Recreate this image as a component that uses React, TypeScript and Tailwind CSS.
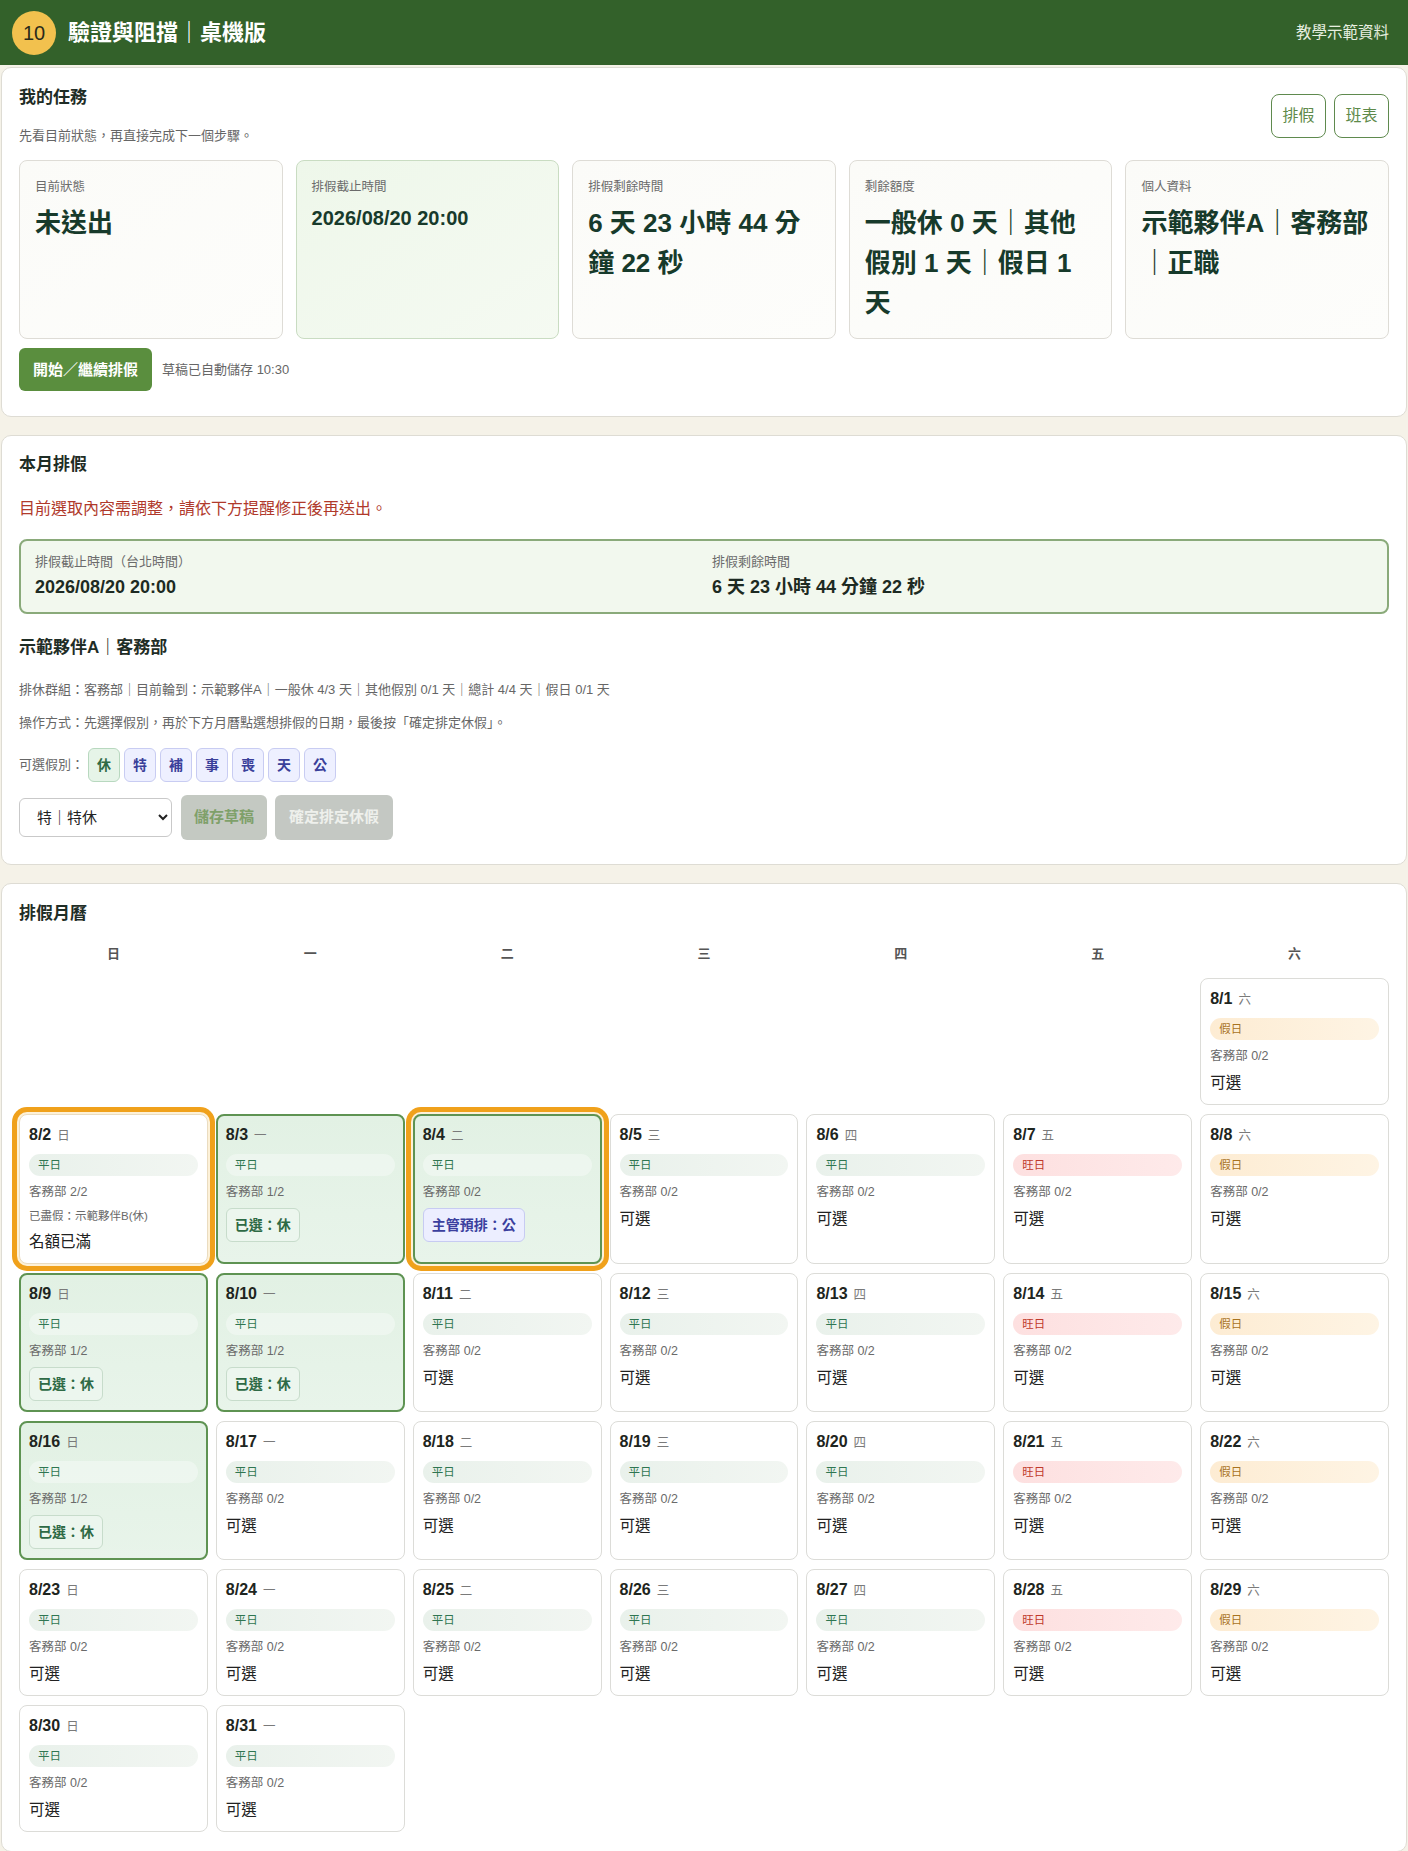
import clsx from 'clsx';

const WEEK = ['日', '一', '二', '三', '四', '五', '六'];

type Status = 'open' | 'full' | 'picked' | 'boss';

type Day = {
  d: number;
  dow: number;
  count: string;
  status: Status;
  selected?: boolean;
  ring?: boolean;
  note?: string;
};

const special: Record<number, Partial<Day>> = {
  2: { count: '2/2', status: 'full', ring: true, note: '已盡假：示範夥伴B(休)' },
  3: { count: '1/2', status: 'picked', selected: true },
  4: { count: '0/2', status: 'boss', selected: true, ring: true },
  9: { count: '1/2', status: 'picked', selected: true },
  10: { count: '1/2', status: 'picked', selected: true },
  16: { count: '1/2', status: 'picked', selected: true },
};

// 2026/08/01 是星期六
const days: Day[] = Array.from({ length: 31 }, (_, i) => {
  const d = i + 1;
  return { d, dow: (6 + i) % 7, count: '0/2', status: 'open' as Status, ...special[d] };
});

const kindOf = (dow: number) => (dow === 6 ? '假日' : dow === 5 ? '旺日' : '平日');

const kindClass: Record<string, string> = {
  平日: 'bg-gradient-to-r from-[#e9f1eb] to-[#f2f6f2] text-[#2f7651]',
  旺日: 'bg-gradient-to-r from-[#fde0e0] to-[#feeaea] text-[#c0392b]',
  假日: 'bg-gradient-to-r from-[#fdecd3] to-[#fef4e4] text-[#a8731f]',
};

const stats = [
  { label: '目前狀態', value: '未送出' },
  { label: '排假截止時間', value: '2026/08/20 20:00', small: true, green: true },
  { label: '排假剩餘時間', value: '6 天 23 小時 44 分鐘 22 秒' },
  { label: '剩餘額度', value: '一般休 0 天｜其他假別 1 天｜假日 1 天' },
  { label: '個人資料', value: '示範夥伴A｜客務部｜正職' },
];

const leaveTypes = ['休', '特', '補', '事', '喪', '天', '公'];

function DayCell({ day }: { day: Day }) {
  const kind = kindOf(day.dow);
  return (
    <div
      className={clsx(
        'flex flex-col gap-[7px] rounded-[8px]',
        day.selected
          ? 'border-2 border-[#5e9352] bg-gradient-to-b from-[#e2f1e4] to-[#e8f4ea] px-[8px] pb-[9px] pt-[7px]'
          : 'border border-[#dcdcd8] bg-white px-[9px] pb-[10px] pt-[8px]',
        day.ring && 'shadow-[0_0_0_2px_#fdf1d8,0_0_0_7px_#f0a11b]',
        day.ring && !day.selected && 'border-[#eadcc0]',
      )}
    >
      <div className="flex h-6 items-baseline text-[16px] font-bold leading-6 text-[#1e2520]">
        <span>8/{day.d}</span>
        <span className="ml-[6px] text-[12.5px] font-normal text-[#7a7a7a]">{WEEK[day.dow]}</span>
      </div>
      <div
        className={clsx(
          'h-[22px] rounded-full pl-[9px] text-[11.5px] leading-[22px]',
          day.selected ? 'bg-white/35 text-[#2f7651]' : kindClass[kind],
        )}
      >
        {kind}
      </div>
      <div className="h-[18px] text-[12.5px] leading-[18px] text-[#6a6a6a]">客務部 {day.count}</div>
      {day.note ? <div className="h-4 text-[11.5px] leading-4 text-[#6a6a6a]">{day.note}</div> : null}
      {day.status === 'open' ? <div className="h-[22px] text-[15.5px] leading-[22px] text-[#222]">可選</div> : null}
      {day.status === 'full' ? <div className="h-[22px] text-[15.5px] leading-[22px] text-[#222]">名額已滿</div> : null}
      {day.status === 'picked' ? (
        <div className="flex h-[34px] items-center self-start rounded-[6px] border border-[#c7dccb] bg-[#ecf6ee] px-2 text-[14px] font-bold text-[#2e6a45]">
          已選：休
        </div>
      ) : null}
      {day.status === 'boss' ? (
        <div className="flex h-[34px] items-center self-start rounded-[6px] border border-[#c7cbf2] bg-[#eceeff] px-2 text-[14px] font-bold text-[#3b3f9e]">
          主管預排：公
        </div>
      ) : null}
    </div>
  );
}

export default function App() {
  const blanks = days[0].dow;

  return (
    <div className="min-h-screen bg-[#f5f2e8] font-['Liberation_Sans','Noto_Sans_CJK_TC',sans-serif] text-[#1f2d26]">
      <header className="flex h-[65px] items-center justify-between bg-[#33612a] pl-[12px] pr-[19px]">
        <div className="flex items-center gap-3">
          <div className="flex h-[44px] w-[44px] items-center justify-center rounded-full bg-[#f2c14e] text-[20px] text-[#2a2a1a]">
            10
          </div>
          <h1 className="text-[22px] font-bold text-white">驗證與阻擋｜桌機版</h1>
        </div>
        <span className="text-[15.5px] text-[#e8efe0]">教學示範資料</span>
      </header>

      <main className="flex flex-col gap-[18px] px-px pt-[2px]">
        {/* 我的任務 */}
        <section className="rounded-[10px] border border-[#dedcd4] bg-white px-[17px] pb-[25px] pt-[18px]">
          <div className="flex items-center justify-between">
            <div>
              <h2 className="text-[17px] font-bold leading-6">我的任務</h2>
              <p className="mt-[17px] text-[13px] leading-[18px] text-[#666]">先看目前狀態，再直接完成下一個步驟。</p>
            </div>
            <div className="flex gap-2">
              <button className="h-[44px] w-[55px] rounded-[8px] border border-[#5f8a4e] bg-white text-[16px] text-[#5e8a4a]">
                排假
              </button>
              <button className="h-[44px] w-[55px] rounded-[8px] border border-[#5f8a4e] bg-white text-[16px] text-[#5e8a4a]">
                班表
              </button>
            </div>
          </div>

          <div className="mt-[15px] grid grid-cols-5 gap-[13px]">
            {stats.map((s) => (
              <div
                key={s.label}
                className={clsx(
                  'rounded-[8px] border px-[15px] pb-[15px] pt-[17px]',
                  s.green
                    ? 'border-[#c9dcc2] bg-gradient-to-br from-[#eef7ea] to-[#f5faf2]'
                    : 'border-[#dedcd6] bg-gradient-to-br from-[#fbfbf8] to-[#fdfdfb]',
                )}
              >
                <div className="text-[12.5px] leading-[18px] text-[#6b6b6b]">{s.label}</div>
                <div
                  className={clsx(
                    'mt-[7px] font-bold text-[#173a2b]',
                    s.small ? 'text-[20px] leading-[30px]' : 'text-[26px] leading-[40px]',
                  )}
                >
                  {s.value}
                </div>
              </div>
            ))}
          </div>

          <div className="mt-[9px] flex items-center gap-[10px]">
            <button className="rounded-[6px] bg-[#5a8e3e] px-[14px] py-[11px] text-[15px] font-bold leading-[21px] text-white">
              開始／繼續排假
            </button>
            <span className="text-[13px] text-[#666]">草稿已自動儲存 10:30</span>
          </div>
        </section>

        {/* 本月排假 */}
        <section className="rounded-[10px] border border-[#dedcd4] bg-white px-[17px] pb-[24px] pt-[17px]">
          <h2 className="text-[17px] font-bold leading-6">本月排假</h2>
          <p className="mt-[21px] text-[16px] leading-[22px] text-[#b0392b]">目前選取內容需調整，請依下方提醒修正後再送出。</p>

          <div className="mt-[19px] grid grid-cols-2 gap-4 rounded-[8px] border-2 border-[#8aaa7a] bg-[#f2f8ee] px-[14px] pb-[14px] pt-[12px]">
            <div>
              <div className="text-[13px] leading-[18px] text-[#6b6b6b]">排假截止時間（台北時間）</div>
              <div className="mt-[5px] text-[18px] font-bold leading-[22px] text-[#1d2a22]">2026/08/20 20:00</div>
            </div>
            <div>
              <div className="text-[13px] leading-[18px] text-[#6b6b6b]">排假剩餘時間</div>
              <div className="mt-[5px] text-[18px] font-bold leading-[22px] text-[#1d2a22]">6 天 23 小時 44 分鐘 22 秒</div>
            </div>
          </div>

          <h3 className="mt-[22px] text-[17px] font-bold leading-6">示範夥伴A｜客務部</h3>
          <p className="mt-[21px] text-[13px] leading-[18px] text-[#666]">
            排休群組：客務部｜目前輪到：示範夥伴A｜一般休 4/3 天｜其他假別 0/1 天｜總計 4/4 天｜假日 0/1 天
          </p>
          <p className="mt-[15px] text-[13px] leading-[18px] text-[#666]">
            操作方式：先選擇假別，再於下方月曆點選想排假的日期，最後按「確定排定休假」。
          </p>

          <div className="mt-[16px] flex items-center gap-1">
            <span className="text-[13px] text-[#666]">可選假別：</span>
            {leaveTypes.map((t) => (
              <span
                key={t}
                className={clsx(
                  'flex h-[34px] items-center rounded-[6px] border px-2 text-[14px] font-bold',
                  t === '休'
                    ? 'border-[#b8d8bf] bg-[#e6f4e8] text-[#2f6b45]'
                    : 'border-[#c8ccf2] bg-[#eef0ff] text-[#3a3f9a]',
                )}
              >
                {t}
              </span>
            ))}
          </div>

          <div className="mt-[13px] flex items-center gap-2">
            <select
              defaultValue="特"
              className="mr-[1px] h-[39px] w-[153px] rounded-[6px] border border-[#c9c9c9] bg-white pl-[13px] pr-2 text-[15px] text-[#222]"
            >
              <option value="休">休｜一般休</option>
              <option value="特">特｜特休</option>
              <option value="補">補｜補休</option>
            </select>
            <button className="h-[45px] rounded-[6px] bg-[#c4c9c2] px-[13px] text-[15px] font-bold text-[#7fa06a]">
              儲存草稿
            </button>
            <button className="h-[45px] rounded-[6px] bg-[#c4c8c3] px-[14px] text-[15px] font-bold text-[#eef0ec]">
              確定排定休假
            </button>
          </div>
        </section>

        {/* 排假月曆 */}
        <section className="rounded-[10px] border border-[#dedcd4] bg-white px-[17px] pb-[19px] pt-[18px]">
          <h2 className="text-[17px] font-bold leading-6">排假月曆</h2>
          <div className="mt-[19px] grid grid-cols-7 gap-2 text-center text-[13px] font-bold leading-[18px] text-[#555]">
            {WEEK.map((w) => (
              <div key={w}>{w}</div>
            ))}
          </div>
          <div className="mt-[15px] grid grid-cols-7 gap-x-2 gap-y-[9px]">
            {Array.from({ length: blanks }, (_, i) => (
              <div key={`b${i}`} />
            ))}
            {days.map((day) => (
              <DayCell key={day.d} day={day} />
            ))}
          </div>
        </section>
      </main>
    </div>
  );
}
